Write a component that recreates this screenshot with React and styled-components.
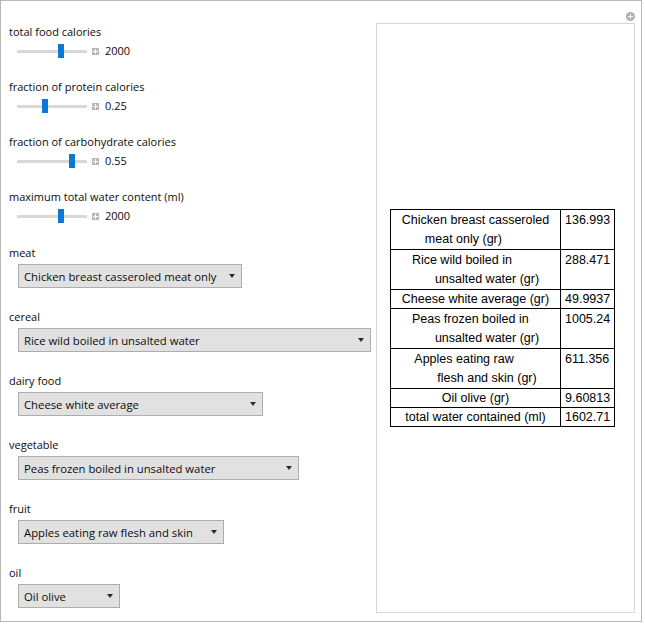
import React from 'react';
import styled, { createGlobalStyle } from 'styled-components';

const Global = createGlobalStyle`
  html, body { margin: 0; padding: 0; background: #fff; }
  body { font-family: "Open Sans", "Noto Sans", sans-serif; color: #111; }
`;

const Frame = styled.div`
  position: relative;
  box-sizing: border-box;
  width: 642px;
  height: 622px;
  border: 1px solid #b8b8b8;
  background: #fff;
  display: flex;
`;

const Controls = styled.div`
  box-sizing: border-box;
  width: 375px;
  padding: 23px 0 0 8px;
  display: flex;
  flex-direction: column;
`;

const Block = styled.div`
  display: flex;
  flex-direction: column;
  align-items: flex-start;
  margin-bottom: ${(p) => p.$gap}px;
`;

const Label = styled.div`
  font-size: 11px;
  line-height: 16px;
  height: 16px;
  color: #0c0c0c;
  white-space: nowrap;
`;

const SliderRow = styled.div`
  margin-top: 2px;
  height: 18px;
  padding-left: 8px;
  display: flex;
  align-items: center;
`;

const Track = styled.div`
  position: relative;
  width: 70px;
  height: 3px;
  background: #d8d8d8;
`;

const Thumb = styled.div`
  position: absolute;
  top: -6px;
  width: 6px;
  height: 14px;
  background: #0a78d6;
`;

const PlusBox = styled.div`
  position: relative;
  width: 7px;
  height: 7px;
  margin-left: 5px;
  background: #b8b8b8;
  &::before, &::after {
    content: '';
    position: absolute;
    background: #fff;
  }
  &::before { left: 1px; right: 1px; top: 3px; height: 1px; }
  &::after { top: 1px; bottom: 1px; left: 3px; width: 1px; }
`;

const Value = styled.span`
  margin-left: 6px;
  font-size: 11px;
  line-height: 16px;
  color: #0c0c0c;
`;

const Select = styled.div`
  box-sizing: border-box;
  margin-top: 3px;
  margin-left: 9px;
  width: ${(p) => p.$w}px;
  height: 24px;
  border: 1px solid #adadad;
  background: #e1e1e1;
  padding: 0 5px 0 5px;
  display: flex;
  align-items: center;
  justify-content: space-between;
  font-size: 11.3px;
  color: #0c0c0c;
  white-space: nowrap;
`;

const Arrow = styled.span`
  width: 0;
  height: 0;
  border-left: 3.5px solid transparent;
  border-right: 3.5px solid transparent;
  border-top: 4px solid #2b2b2b;
  margin-right: 1px;
`;

const Panel = styled.div`
  box-sizing: border-box;
  width: 259px;
  margin: 22px 6px 8px 0;
  border: 1px solid #d6d6d6;
  display: flex;
  align-items: center;
  justify-content: center;
  padding-right: 6px;
`;

const Corner = styled.div`
  position: absolute;
  right: 6px;
  top: 11px;
  width: 9px;
  height: 9px;
  border-radius: 50%;
  background: #b0b0b0;
  &::before, &::after {
    content: '';
    position: absolute;
    background: #fff;
  }
  &::before { left: 2px; right: 2px; top: 4px; height: 1px; }
  &::after { top: 2px; bottom: 2px; left: 4px; width: 1px; }
`;

const Table = styled.table`
  border-collapse: collapse;
  font-family: "Liberation Sans", Arial, sans-serif;
  font-size: 12.5px;
  color: #000;
`;

const NameCell = styled.td`
  border: 1px solid #000;
  width: 169px;
  padding: 1px 0 0 0;
  text-align: center;
  vertical-align: top;
  line-height: ${(p) => (p.$single ? 17 : 19)}px;
`;

const ValueCell = styled.td`
  border: 1px solid #000;
  width: 49px;
  padding: 1px 0 0 4px;
  text-align: left;
  vertical-align: top;
  line-height: ${(p) => (p.$single ? 17 : 19)}px;
`;

const NameBlock = styled.span`
  display: inline-block;
  text-align: left;
  white-space: nowrap;
`;

const Line = styled.span`
  display: block;
  padding-left: ${(p) => (p.$indent ? 23 : 0)}px;
`;

const sliders = [
  { label: 'total food calories', value: '2000', pos: 41 / 64 },
  { label: 'fraction of protein calories', value: '0.25', pos: 25 / 64 },
  { label: 'fraction of carbohydrate calories', value: '0.55', pos: 52 / 64 },
  { label: 'maximum total water content (ml)', value: '2000', pos: 41 / 64 },
];

const menus = [
  { label: 'meat', value: 'Chicken breast casseroled meat only', w: 224 },
  { label: 'cereal', value: 'Rice wild boiled in unsalted water', w: 353 },
  { label: 'dairy food', value: 'Cheese white average', w: 245 },
  { label: 'vegetable', value: 'Peas frozen boiled in unsalted water', w: 281 },
  { label: 'fruit', value: 'Apples eating raw flesh and skin', w: 206 },
  { label: 'oil', value: 'Oil olive', w: 102 },
];

const rows = [
  { lines: ['Chicken breast casseroled', 'meat only (gr)'], value: '136.993' },
  { lines: ['Rice wild boiled in', 'unsalted water (gr)'], value: '288.471' },
  { lines: ['Cheese white average (gr)'], value: '49.9937' },
  { lines: ['Peas frozen boiled in', 'unsalted water (gr)'], value: '1005.24' },
  { lines: ['Apples eating raw', 'flesh and skin (gr)'], value: '611.356' },
  { lines: ['Oil olive (gr)'], value: '9.60813' },
  { lines: ['total water contained (ml)'], value: '1602.71' },
];

export default function App() {
  return (
    <>
      <Global />
      <Frame>
        <Controls>
          {sliders.map((s, i) => (
            <Block key={s.label} $gap={i === sliders.length - 1 ? 20 : 19}>
              <Label>{s.label}</Label>
              <SliderRow>
                <Track>
                  <Thumb style={{ left: `${s.pos * 64}px` }} />
                </Track>
                <PlusBox />
                <Value>{s.value}</Value>
              </SliderRow>
            </Block>
          ))}
          {menus.map((m) => (
            <Block key={m.label} $gap={21}>
              <Label>{m.label}</Label>
              <Select $w={m.w}>
                <span>{m.value}</span>
                <Arrow />
              </Select>
            </Block>
          ))}
        </Controls>
        <Panel>
          <Table>
            <tbody>
              {rows.map((r) => {
                const single = r.lines.length === 1;
                return (
                  <tr key={r.value}>
                    <NameCell $single={single}>
                      <NameBlock>
                        {r.lines.map((l, j) => (
                          <Line key={l} $indent={j > 0}>{l}</Line>
                        ))}
                      </NameBlock>
                    </NameCell>
                    <ValueCell $single={single}>{r.value}</ValueCell>
                  </tr>
                );
              })}
            </tbody>
          </Table>
        </Panel>
        <Corner />
      </Frame>
    </>
  );
}
